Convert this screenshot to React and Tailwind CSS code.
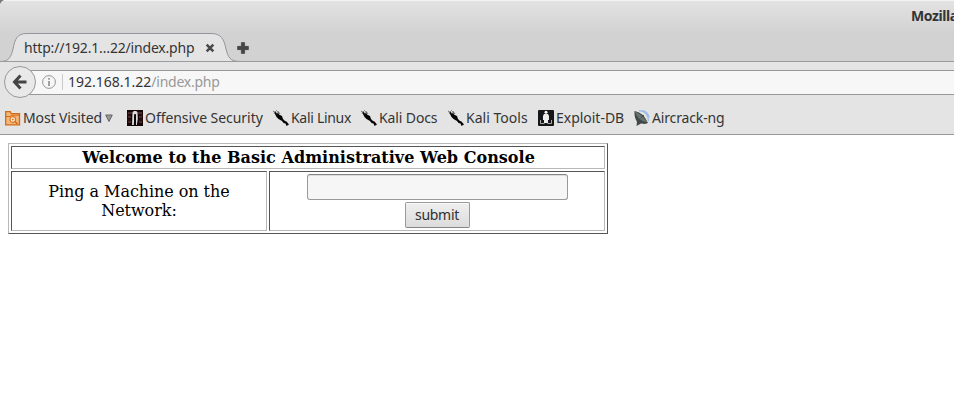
import React from 'react';

const kaliPath = 'M0 1L2 3 2.500 1 4 4 5 2 6 4.500 9 6 10 9 12 11 13.500 11.500 16 14.500 13.500 16 12.500 13.500 10.500 13 9 11 5.500 9 3.500 7 2.500 5z';

function KaliIcon() {
  return (
    <svg className="h-4 w-4 shrink-0" viewBox="0 0 16 16">
      <path d="M0 1l3 1.500M3 0l4 4M5 1l2 3" stroke="#777" strokeWidth=".8" />
      <path d={kaliPath} fill="#050505" />
    </svg>
  );
}

function FolderIcon() {
  return (
    <svg className="h-4 w-4 shrink-0" viewBox="0 0 16 16" fill="none">
      <path d="M.7 14.800V1.700h4.600l1 2h8.200v11.100z" fill="#f5b878" stroke="#cf6a18" strokeWidth="1.300" />
      <path d="M1 6.500h4.500l1-1.300h8" stroke="#cf6a18" />
      <circle cx="7.800" cy="9.500" r="2.800" fill="#fff0dc" stroke="#d8792b" strokeWidth="1.200" />
      <circle cx="7.800" cy="9.500" r="1" fill="#d8792b" />
      <path d="M10 11.500l2.500 2.500" stroke="#cf6a18" strokeWidth="1.500" />
    </svg>
  );
}

function OffensiveIcon() {
  return (
    <svg className="h-4 w-4 shrink-0" viewBox="0 0 16 16">
      <path d="M0 0h16v16H0z" fill="#160808" />
      <path d="M1 3h4M1 7h3M1 12h3M11 3h4M12 7h3M12 12h3" stroke="#593638" strokeWidth="1.300" />
      <path d="M0 5h4M12 5h4M0 10h4M12 10h4" stroke="#3c1518" />
      <path d="M5.500 2L7 1h2l1.500 1 .3 7-1 6H9V5H7.500L6.800 15H5z" fill="#ddd" />
      <path d="M7.200 4h1.600v6L8.500 16H7z" fill="#080808" />
    </svg>
  );
}

function ExploitIcon() {
  return (
    <svg className="h-4 w-4 shrink-0" viewBox="0 0 16 16">
      <rect width="16" height="16" rx="1" fill="#151719" />
      <circle cx="8" cy="2.300" r="1.500" fill="#fff" />
      <path d="M6 4h4l1 2v4h-1v3H6v-3H5V6z" fill="#eee" />
      <path d="M2.500 10v3.500h4M13.500 10v3.500h-4" fill="none" stroke="#aaa" />
    </svg>
  );
}

function AircrackIcon() {
  return (
    <svg className="h-4 w-4 shrink-0" viewBox="0 0 16 16">
      <path d="M5 .7Q14 1 14.500 11M8 .7q6 1 7 7" fill="none" stroke="#9bbbea" strokeWidth="1.300" />
      <path d="M.5 1Q9 2 14 13l-3 1-4-.5L2.500 16 3 12Q0 7 .5 1z" fill="#42494b" />
      <path d="M1 1.500Q8 4 13 12.500 3 10 1 1.500z" fill="#69736e" />
      <path d="M6.500 8L10 5" stroke="#454e50" />
    </svg>
  );
}

function Bookmark({ icon, label, className }) {
  return (
    <div className={`flex h-4 shrink-0 items-center ${className}`}>
      {icon}
      <span className="ml-[2px] whitespace-nowrap leading-4">{label}</span>
    </div>
  );
}

function TabStrip() {
  return (
    <div className="relative h-[62px] overflow-hidden border-b border-[#999b9d] bg-linear-to-b from-[#e3e3e3] to-[#d2d2d2] to-55%">
      <div className="h-px bg-[#f3f3f3]" />
      <svg className="absolute top-0 left-0" width="5" height="5" viewBox="0 0 5 5">
        <path d="M0 0h4Q1 1 0 4z" fill="#777" />
      </svg>
      <span className="absolute top-[7px] left-[911px] text-[14px] leading-[18px] font-bold tracking-[-0.400px] whitespace-nowrap">Mozilla Firefox</span>
      <svg className="absolute top-[32px] left-0" width="240" height="30" viewBox="0 0 240 30">
        <path d="M0 29.500C9 29.500 11 25 13 17 15 7 17 1.500 27 1.500H211C221 1.500 224 7 226 17c2 8 4 12.500 12 12.500V30H0z" fill="#e4e4e4" />
        <path d="M0 29.500C9 29.500 11 25 13 17 15 7 17 1.500 27 1.500H211C221 1.500 224 7 226 17c2 8 4 12.500 14 12.500" fill="none" stroke="#92969a" />
      </svg>
      <div className="absolute top-[39px] left-[24px] flex items-center">
        <span className="w-[181px] whitespace-nowrap leading-[18px] tracking-[-0.190px]">http://192.1…22/index.php</span>
        <svg className="h-[10px] w-[10px]" viewBox="0 0 9 9"><path d="M1.500 1.500l6 6m0-6l-6 6" stroke="#484848" strokeWidth="2.300" /></svg>
        <svg className="ml-[22px] h-[12px] w-[12px]" viewBox="0 0 11 11"><path d="M4 .5h3V4h3.500v3H7v3.500H4V7H.5V4H4z" fill="#454545" stroke="#333" strokeWidth=".5" /></svg>
      </div>
    </div>
  );
}

function AddressBar() {
  return (
    <div className="flex h-[40px] items-center pl-[4px]">
      <div className="z-10 flex h-8 w-8 shrink-0 items-center justify-center rounded-full border border-[#999] bg-[#e9e9e9]">
        <svg className="h-4 w-4" viewBox="0 0 16 16" fill="none" stroke="#454545" strokeWidth="3">
          <path d="M14.500 8H3M8.500 1.500L2.500 8l6 6.500" />
        </svg>
      </div>
      <div className="-ml-[8px] flex h-[25px] flex-1 items-center border-y border-[#989898] bg-[#f7f7f7] pl-[14px]">
        <svg className="h-[14px] w-[14px]" viewBox="0 0 14 14">
          <circle cx="7" cy="7" r="6.400" fill="none" stroke="#959595" />
          <path d="M7 6v5M7 3v1.700" stroke="#858585" strokeWidth="1.500" />
        </svg>
        <div className="ml-[6px] h-4 w-px bg-[#cbcbcb]" />
        <span className="ml-[5px] pb-[2px] whitespace-nowrap">192.168.1.22<span className="tracking-[-0.250px] text-[#999]">/index.php</span></span>
      </div>
    </div>
  );
}

export default function App() {
  return (
    <div className="h-[420px] w-full overflow-hidden bg-white font-['Noto_Sans','Open_Sans',sans-serif] text-[14px] text-[#343434]">
      <header className="h-[135px] border-b border-[#999] bg-[#e4e4e4]">
        <TabStrip />
        <AddressBar />
        <nav className="flex h-8 items-center pl-[5px] tracking-[-0.300px]">
          <div className="flex w-[122px] shrink-0 items-center">
            <Bookmark icon={<FolderIcon />} label="Most Visited" className="w-[100px] tracking-[-0.120px]" />
            <svg className="h-2 w-2" viewBox="0 0 8 8"><path d="M.7 1h6.600L4 7.500z" fill="#999" stroke="#666" /></svg>
          </div>
          <Bookmark icon={<OffensiveIcon />} label="Offensive Security" className="w-[146px] tracking-[-0.050px]" />
          <Bookmark icon={<KaliIcon />} label="Kali Linux" className="w-[88px]" />
          <Bookmark icon={<KaliIcon />} label="Kali Docs" className="w-[87px] tracking-[-0.120px]" />
          <Bookmark icon={<KaliIcon />} label="Kali Tools" className="w-[90px] tracking-[0.030px]" />
          <Bookmark icon={<ExploitIcon />} label="Exploit-DB" className="w-[96px] tracking-[-0.020px]" />
          <Bookmark icon={<AircrackIcon />} label="Aircrack-ng" className="w-[100px] tracking-[-0.150px]" />
        </nav>
      </header>
      <main className="pt-[8px] pl-[8px] font-['DejaVu_Serif',serif] text-[16px] leading-[19px] text-black">
        <div className="grid h-[91px] w-[600px] grid-cols-[256px_336px] grid-rows-[23px_60px] gap-[2px] border border-t-[#b8b8b8] border-r-[#555] border-b-[#555] border-l-[#b8b8b8] p-[2px]">
          <div className="col-span-2 flex items-center justify-center border border-t-[#555] border-r-[#b8b8b8] border-b-[#b8b8b8] border-l-[#555] pl-px font-bold tracking-[0.030px]">Welcome to the Basic Administrative Web Console</div>
          <div className="flex items-center justify-center border border-t-[#555] border-r-[#b8b8b8] border-b-[#b8b8b8] border-l-[#555] text-center tracking-[-0.060px]">
            <span>Ping a Machine on the<br />Network:</span>
          </div>
          <form className="flex flex-col items-center gap-[2px] border border-t-[#555] border-r-[#b8b8b8] border-b-[#b8b8b8] border-l-[#555] pt-[2px]">
            <input className="h-[26px] w-[261px] rounded-[3px] border border-[#999] border-t-[#858585] bg-[#f6f6f6] shadow-[inset_0_1px_0_#ddd]" />
            <button type="button" className="h-[26px] w-[65px] rounded-[2px] border border-[#999] border-b-[#858585] bg-linear-to-b from-[#efefef] to-[#dcdcdc] font-['Noto_Sans',sans-serif] text-[14px] leading-[24px] tracking-[-0.300px] text-[#303030] shadow-[inset_0_1px_0_#fafafa]">submit</button>
          </form>
        </div>
      </main>
    </div>
  );
}
